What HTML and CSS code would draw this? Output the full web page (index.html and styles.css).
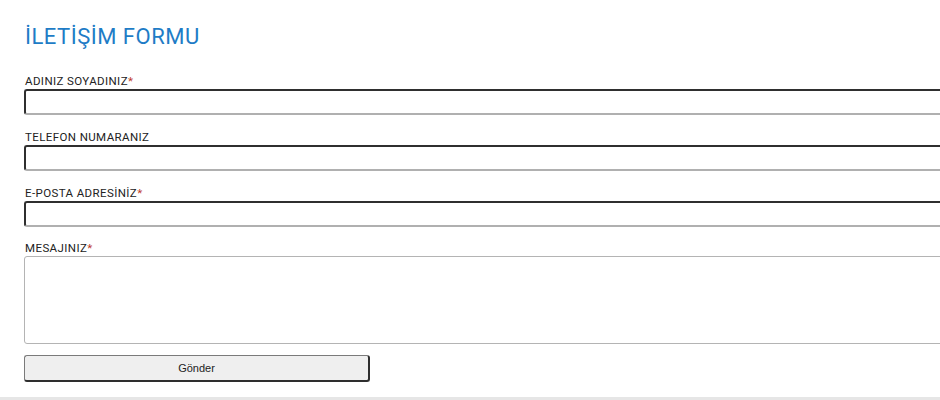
FILE: index.html
```html
<!DOCTYPE html>
<html lang="tr">
<head>
<meta charset="utf-8">
<title>İletişim Formu</title>
<link rel="stylesheet" href="styles.css">
</head>
<body>
<div class="page">
  <h1 class="title">İLETİŞİM FORMU</h1>
  <form class="form">
    <div class="field">
      <label class="label">ADINIZ SOYADINIZ<span class="req">*</span></label>
      <input class="input" type="text">
    </div>
    <div class="field">
      <label class="label">TELEFON NUMARANIZ</label>
      <input class="input" type="text">
    </div>
    <div class="field field-tight">
      <label class="label">E-POSTA ADRESİNİZ<span class="req">*</span></label>
      <input class="input" type="text">
    </div>
    <div class="field field-last">
      <label class="label">MESAJINIZ<span class="req">*</span></label>
      <textarea class="textarea"></textarea>
    </div>
    <button class="button" type="button">Gönder</button>
  </form>
</div>
<div class="footer"></div>
</body>
</html>
```
FILE: styles.css
```css
html, body {
  margin: 0;
  padding: 0;
  overflow: hidden;
  background: #ffffff;
}
.page {
  padding: 22px 0 0 24px;
  height: 376px;
  box-sizing: border-box;
}
.title {
  margin: 0 0 0 1px;
  font-family: Roboto, "Liberation Sans", sans-serif;
  font-weight: 400;
  font-size: 22px;
  line-height: 30px;
  letter-spacing: 0.5px;
  color: #1e7cc6;
}
.form {
  margin-top: 21px;
  display: flex;
  flex-direction: column;
}
.field {
  display: flex;
  flex-direction: column;
  margin-bottom: 14px;
}
.field-tight {
  margin-bottom: 13px;
}
.field-last {
  margin-bottom: 11px;
}
.label {
  display: block;
  font-family: Roboto, "Liberation Sans", sans-serif;
  font-size: 11.5px;
  line-height: 16px;
  letter-spacing: 0.4px;
  color: #222;
  margin-left: 1px;
}
.req {
  color: #c0392b;
}
.input {
  width: 960px;
  height: 26px;
  box-sizing: border-box;
  border-style: solid;
  border-width: 2px;
  border-color: #2f2f2f #b0b0b0 #b0b0b0 #2f2f2f;
  border-radius: 3px;
  padding: 0 4px;
  margin: 0;
  background: #fff;
}
.textarea {
  width: 960px;
  height: 88px;
  box-sizing: border-box;
  border: 1px solid #b4b4b4;
  border-radius: 3px;
  margin: 0;
  resize: none;
  background: #fff;
}
.button {
  width: 346px;
  height: 27px;
  box-sizing: border-box;
  background: #efefef;
  border-style: solid;
  border-width: 1px 2px 2px 1px;
  border-color: #7a7a7a #2e2e2e #2e2e2e #7a7a7a;
  border-radius: 3px;
  font-family: "Liberation Sans", Arial, sans-serif;
  font-size: 11px;
  color: #222;
  padding: 0;
  margin: 0;
}
.footer {
  height: 0;
  border-top: 3px solid #e6e6e6;
  margin-top: 21px;
}
```
